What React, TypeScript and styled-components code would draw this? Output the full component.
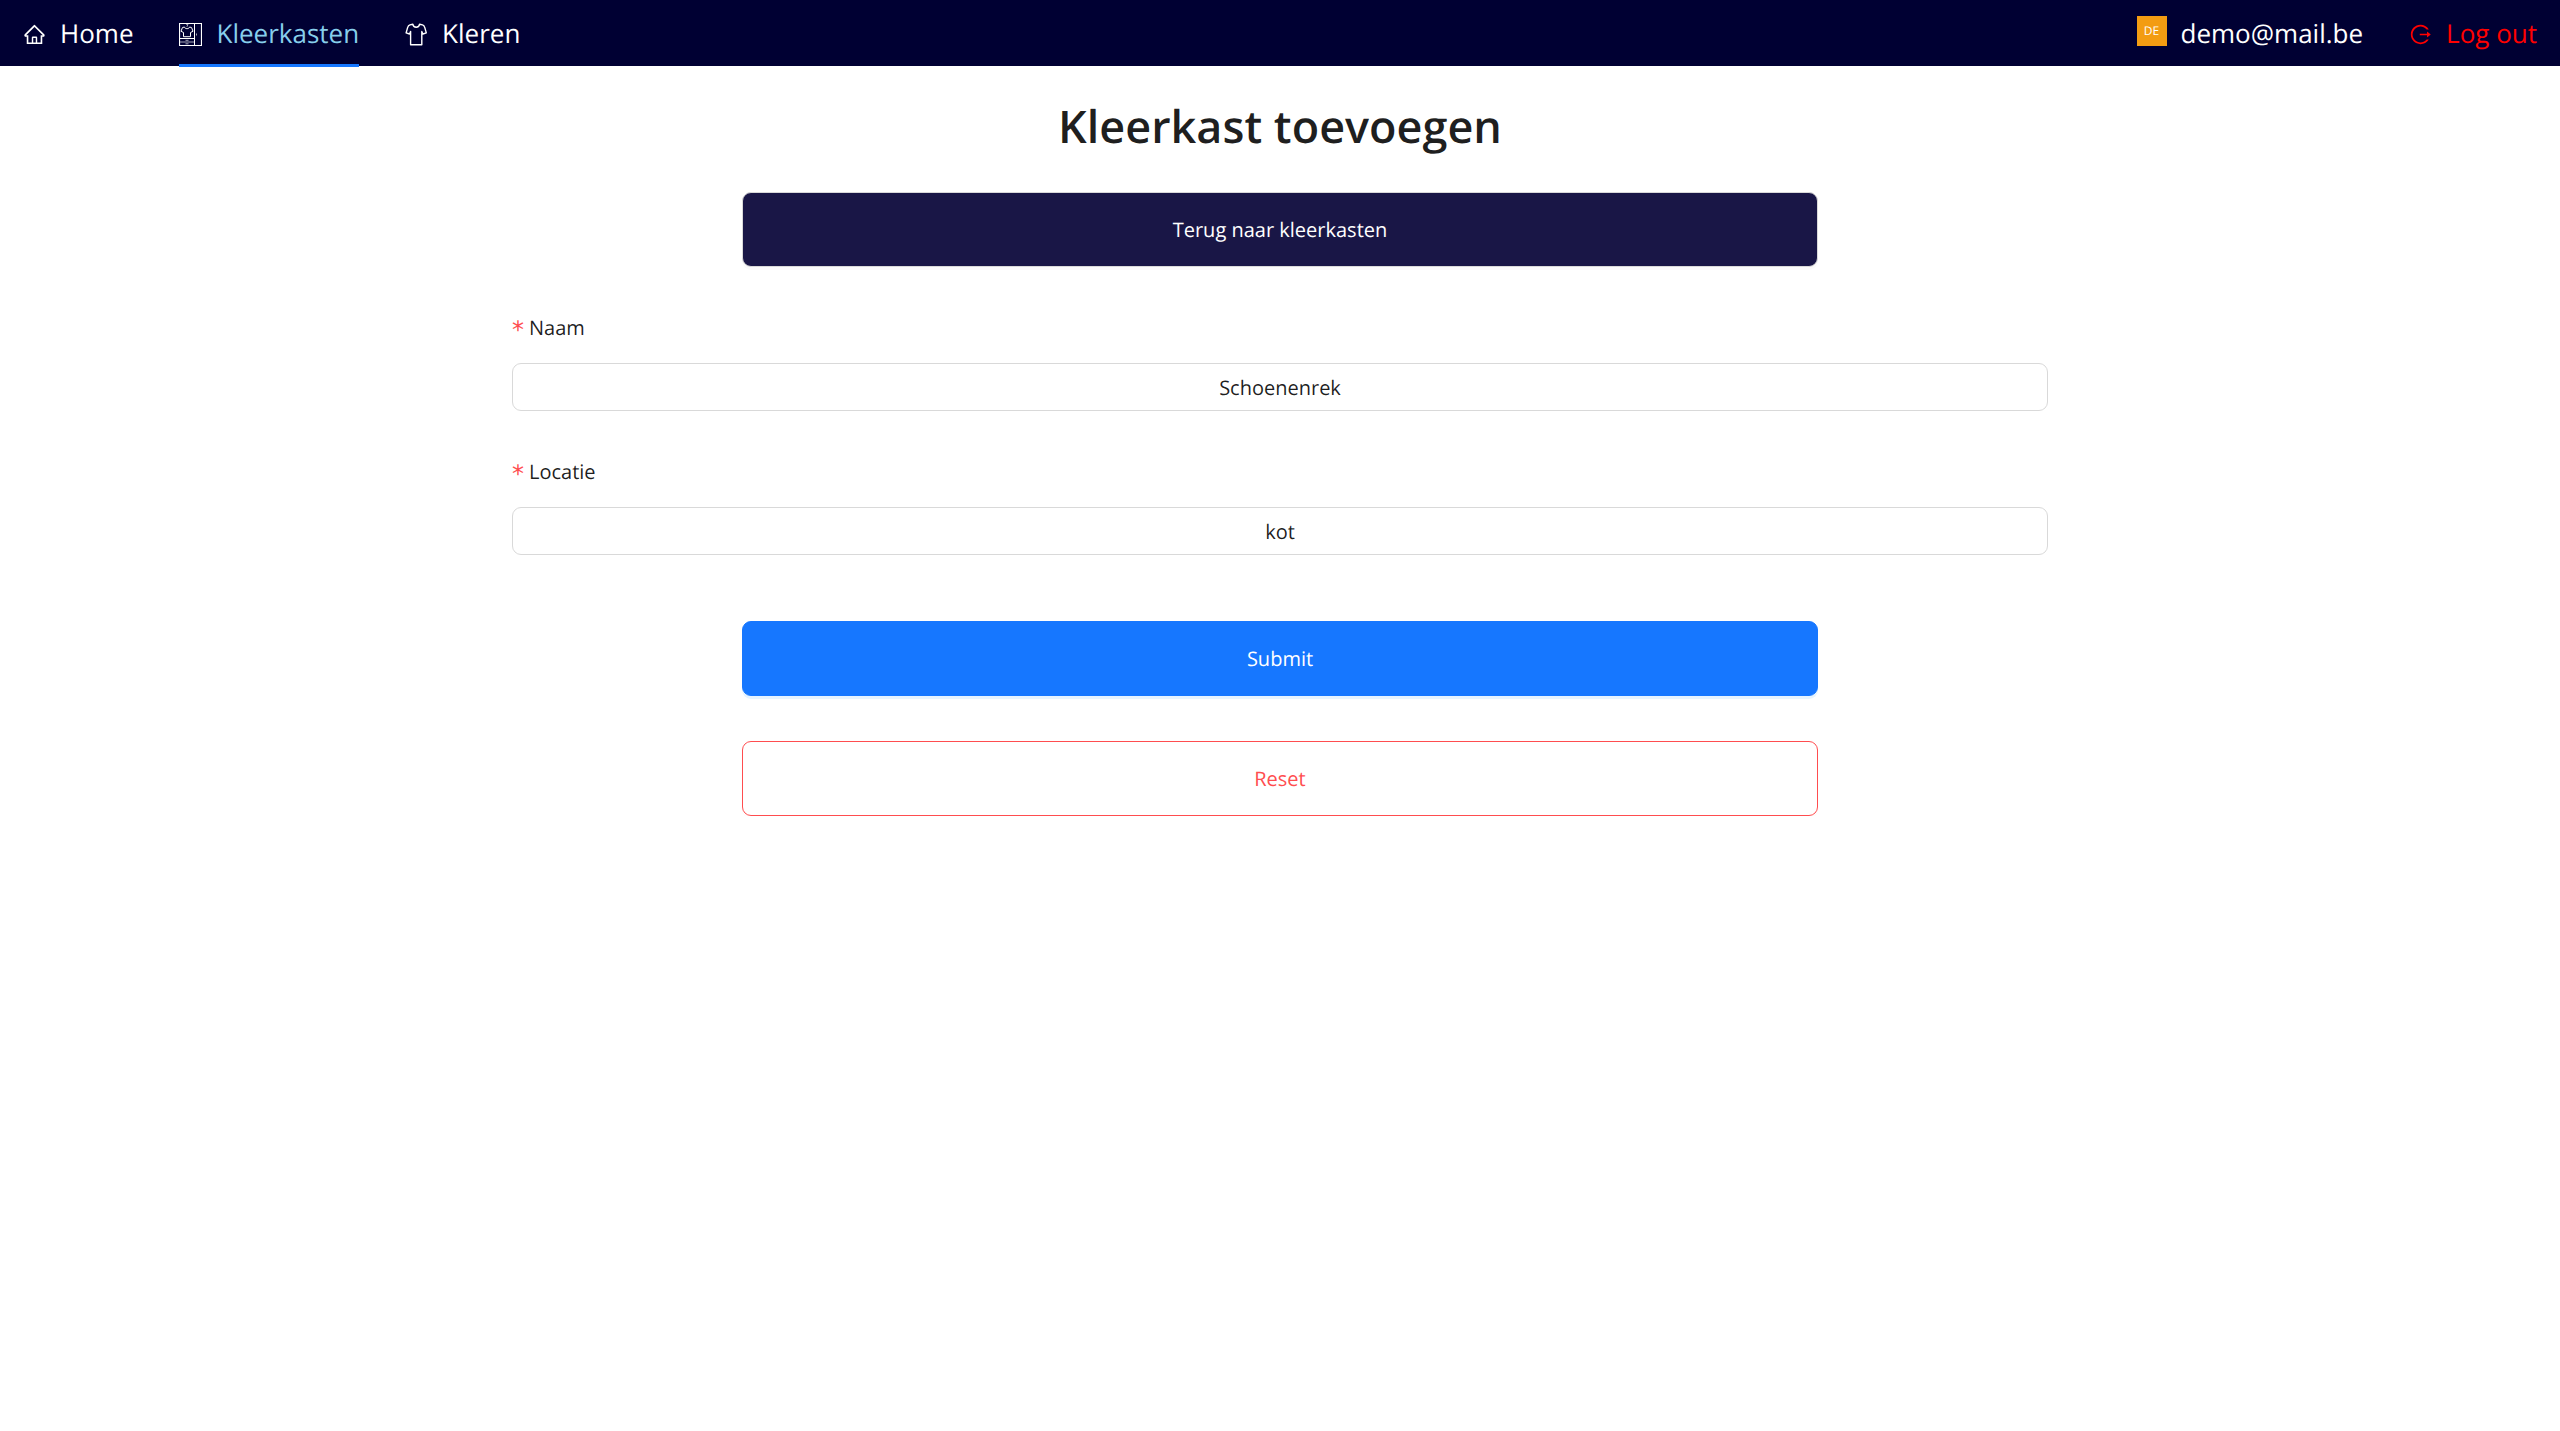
import React from 'react';
import styled, { createGlobalStyle } from 'styled-components';
import { AiOutlineHome, AiOutlineLogout } from 'react-icons/ai';

const GlobalStyle = createGlobalStyle`
  *, *::before, *::after {
    box-sizing: border-box;
  }
  body {
    margin: 0;
    background: #fff;
    color: rgba(0, 0, 0, 0.88);
    font-family: 'Segoe UI', 'Open Sans', 'Noto Sans', sans-serif;
    font-size: 20px;
    line-height: 32px;
    text-rendering: geometricPrecision;
  }
`;

const NavBar = styled.nav`
  display: flex;
  justify-content: space-between;
  height: 66px;
  background: #000033;
`;

const NavGroup = styled.ul`
  display: flex;
  gap: 46px;
  margin: 0;
  padding: 0 23px;
  list-style: none;
`;

const NavLink = styled.a<{ $active?: boolean; $danger?: boolean }>`
  display: flex;
  align-items: center;
  gap: 14px;
  height: 67px;
  padding-top: 1px;
  border-bottom: 3px solid ${(p) => (p.$active ? '#1677ff' : 'transparent')};
  color: ${(p) => (p.$danger ? '#ff0000' : p.$active ? '#87ceeb' : '#fff')};
  font-size: 26px;
  text-decoration: none;
  white-space: nowrap;

  svg {
    flex: none;
    margin-top: 4px;
    color: ${(p) => (p.$danger ? '#ff0000' : '#fff')};
  }
`;

const Avatar = styled.span`
  display: flex;
  align-items: center;
  justify-content: center;
  width: 30px;
  height: 30px;
  margin-bottom: 3px;
  background: #f39c12;
  color: #fff;
  font-size: 12px;
  line-height: 30px;
`;

const Page = styled.main`
  display: flex;
  flex-direction: column;
  align-items: center;
`;

const Title = styled.h1`
  margin: 29px 0 33px;
  font-size: 45px;
  font-weight: 600;
  line-height: 64px;
`;

const Button = styled.button<{ $variant: 'dark' | 'primary' | 'danger' }>`
  height: 75px;
  padding: 0 24px;
  border: 1px solid
    ${(p) => ({ dark: '#d9d9d9', primary: '#1677ff', danger: '#ff4d4f' })[p.$variant]};
  border-radius: 9px;
  background: ${(p) => ({ dark: '#191646', primary: '#1677ff', danger: '#fff' })[p.$variant]};
  box-shadow: 0 3px 0
    ${(p) =>
      ({
        dark: 'rgba(0, 0, 0, 0.02)',
        primary: 'rgba(5, 145, 255, 0.1)',
        danger: 'rgba(255, 38, 5, 0.02)',
      })[p.$variant]};
  color: ${(p) => (p.$variant === 'danger' ? '#ff4d4f' : '#fff')};
  font: inherit;
  text-rendering: inherit;
  cursor: pointer;
`;

const BackButton = styled(Button)`
  width: 42%;
`;

const Form = styled.form`
  display: flex;
  flex-direction: column;
  gap: 45px;
  width: 60%;
  margin-top: 45px;
`;

const Field = styled.div`
  display: flex;
  flex-direction: column;
  gap: 19px;
`;

const Label = styled.label`
  display: flex;
  align-items: center;
  gap: 5px;
`;

const Required = styled.span`
  margin-top: 4px;
  color: #ff4d4f;
  font-family: 'DejaVu Sans', sans-serif;
  font-size: 24px;
  line-height: 28px;
`;

const Input = styled.input`
  width: 100%;
  height: 48px;
  padding: 0 16px;
  border: 1px solid #d9d9d9;
  border-radius: 9px;
  background: #fff;
  color: inherit;
  font: inherit;
  text-align: center;
  text-rendering: inherit;
`;

const Actions = styled.div`
  display: grid;
  grid-template-columns: 70%;
  justify-content: center;
  gap: 45px;
  margin-top: 21px;
`;

const WardrobeIcon = () => (
  <svg width="23" height="23" viewBox="0 0 23 23" fill="none" stroke="currentColor" aria-hidden="true">
    <path d="M.5 .5h22v22H.5z" strokeWidth="1.2" />
    <path d="M15.5 .5v22M.5 15.5h15" />
    <path d="M.5 19h15M6.5 17.3h3M6.5 20.8h3M17.5 10.5v2" strokeOpacity=".65" />
    <path d="M7.2 1.6c.4-.9 2-.7 1.6.5-.2.5-.8.6-.8 1.6" strokeWidth=".8" />
    <path d="M5.4 4 3.4 4.6 2 8.3l2.5 1.2v4.2h7V9.5L14 8.3 12.6 4.6l-2-.6C10 6.2 6 6.2 5.4 4z" />
  </svg>
);

const ShirtIcon = () => (
  <svg
    width="23"
    height="23"
    viewBox="0 0 23 23"
    fill="none"
    stroke="currentColor"
    strokeWidth="1.4"
    strokeLinejoin="round"
    aria-hidden="true"
  >
    <path d="M7.8 1.2 4.9 1.9C3.6 2.3 3 3.3 2.6 4.6L1.1 9.9l3.4 1.1 1.1-2.6v13.4h11.2V8.4l1.1 2.6 3.4-1.1-1.5-5.3c-.4-1.3-1-2.3-2.3-2.7l-2.9-.7c-.5 4-6.3 4-6.8 0z" />
  </svg>
);

const fields = [
  { id: 'naam', label: 'Naam', value: 'Schoenenrek' },
  { id: 'locatie', label: 'Locatie', value: 'kot' },
];

export default function App() {
  return (
    <>
      <GlobalStyle />
      <NavBar>
        <NavGroup>
          <li>
            <NavLink href="#home">
              <AiOutlineHome size={23} />
              Home
            </NavLink>
          </li>
          <li>
            <NavLink href="#kleerkasten" $active>
              <WardrobeIcon />
              Kleerkasten
            </NavLink>
          </li>
          <li>
            <NavLink href="#kleren">
              <ShirtIcon />
              Kleren
            </NavLink>
          </li>
        </NavGroup>
        <NavGroup>
          <li>
            <NavLink href="#account">
              <Avatar>DE</Avatar>
              demo@mail.be
            </NavLink>
          </li>
          <li>
            <NavLink href="#logout" $danger>
              <AiOutlineLogout size={23} />
              Log out
            </NavLink>
          </li>
        </NavGroup>
      </NavBar>
      <Page>
        <Title>Kleerkast toevoegen</Title>
        <BackButton type="button" $variant="dark">
          Terug naar kleerkasten
        </BackButton>
        <Form onSubmit={(e) => e.preventDefault()}>
          {fields.map((f) => (
            <Field key={f.id}>
              <Label htmlFor={f.id}>
                <Required>*</Required>
                {f.label}
              </Label>
              <Input id={f.id} name={f.id} defaultValue={f.value} required />
            </Field>
          ))}
          <Actions>
            <Button type="submit" $variant="primary">
              Submit
            </Button>
            <Button type="reset" $variant="danger">
              Reset
            </Button>
          </Actions>
        </Form>
      </Page>
    </>
  );
}
